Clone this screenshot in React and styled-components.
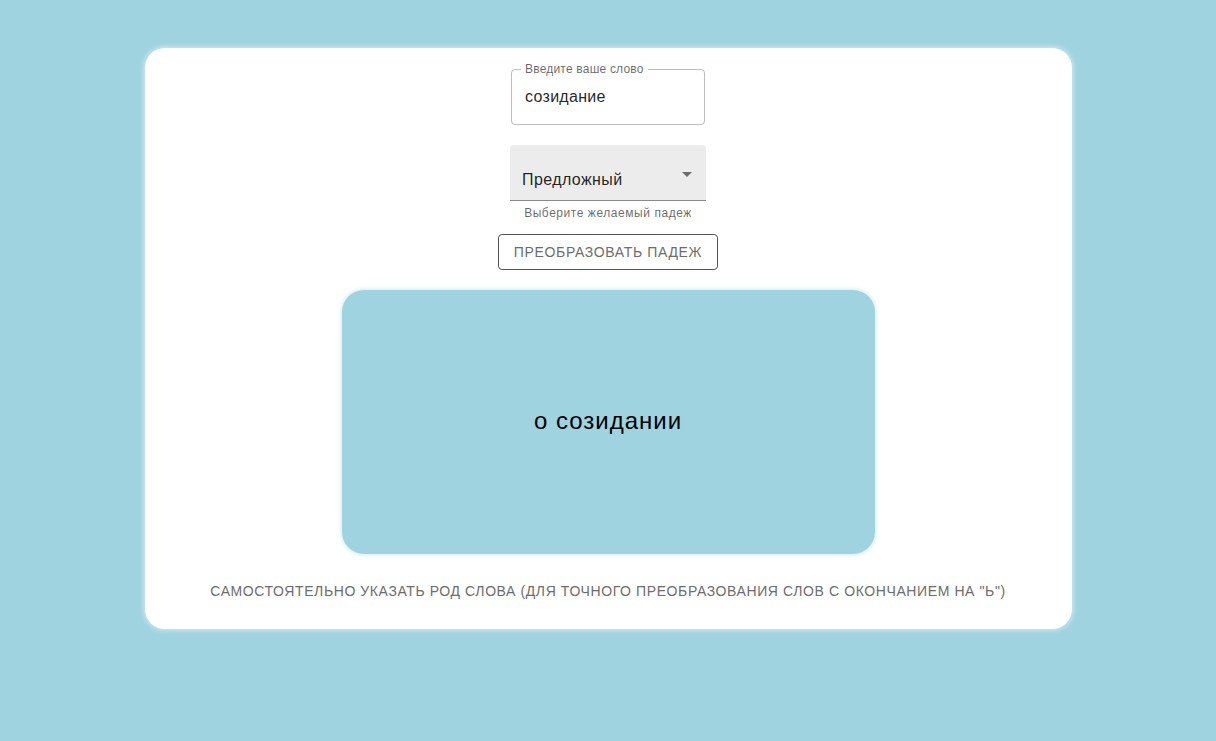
import styled, { createGlobalStyle } from 'styled-components';

const GlobalStyle = createGlobalStyle`
  html, body {
    margin: 0;
    background: #9fd3e0;
    font-family: "Liberation Sans", Arial, sans-serif;
  }
`;

const Page = styled.div`
  min-height: 741px;
  padding-top: 48px;
  box-sizing: border-box;
  display: flex;
  justify-content: center;
  align-items: flex-start;
`;

const Card = styled.div`
  width: 927px;
  box-sizing: border-box;
  background: #fff;
  border-radius: 20px;
  box-shadow: 0 0 4px 2px #c7e6ee;
  padding: 21px 0 20px;
  display: flex;
  flex-direction: column;
  align-items: center;
`;

const Outlined = styled.div`
  width: 194px;
  height: 56px;
  box-sizing: border-box;
  border: 1px solid rgba(0, 0, 0, 0.26);
  border-radius: 4px;
  padding: 0 13px;
  position: relative;
  display: flex;
  align-items: center;
`;

const FloatLabel = styled.span`
  position: absolute;
  left: 9px;
  top: -8px;
  padding: 0 4px;
  background: #fff;
  font-size: 12px;
  line-height: 14px;
  letter-spacing: 0.2px;
  color: rgba(0, 0, 0, 0.6);
`;

const Value = styled.div`
  font-size: 16px;
  letter-spacing: 0.3px;
  color: rgba(0, 0, 0, 0.87);
`;

const SelectWrap = styled.div`
  margin-top: 20px;
  display: flex;
  flex-direction: column;
  align-items: center;
`;

const Filled = styled.div`
  width: 196px;
  height: 56px;
  box-sizing: border-box;
  background: #ececec;
  border-radius: 4px 4px 0 0;
  border-bottom: 1px solid rgba(0, 0, 0, 0.42);
  padding: 26px 12px 0 12px;
  display: flex;
  justify-content: space-between;
  align-items: flex-start;
  font-size: 16px;
  letter-spacing: 0.4px;
  color: rgba(0, 0, 0, 0.87);
`;

const Arrow = styled.svg`
  width: 24px;
  height: 24px;
  fill: rgba(0, 0, 0, 0.54);
  margin-top: -9px;
  margin-right: -5px;
`;

const Helper = styled.div`
  font-size: 12px;
  color: rgba(0, 0, 0, 0.6);
  margin-top: 4px;
  line-height: 16px;
  letter-spacing: 0.55px;
`;

const OutlineButton = styled.button`
  margin-top: 13px;
  height: 36px;
  width: 220px;
  padding: 0;
  background: #fff;
  border: 1px solid #555;
  border-radius: 4px;
  font-family: inherit;
  font-size: 14px;
  letter-spacing: 0.65px;
  color: #6d6d6d;
  text-transform: uppercase;
  cursor: pointer;
`;

const Result = styled.div`
  margin-top: 20px;
  width: 533px;
  height: 264px;
  background: #9fd3e0;
  border-radius: 22px;
  box-shadow: 0 0 3px 2px #e2f2f6;
  display: flex;
  align-items: center;
  justify-content: center;
  font-size: 24px;
  letter-spacing: 1px;
  color: #000;
  padding-bottom: 2px;
  box-sizing: border-box;
`;

const TextButton = styled.button`
  margin-top: 19px;
  height: 36px;
  padding: 0 8px;
  background: transparent;
  border: none;
  font-family: inherit;
  font-size: 14px;
  letter-spacing: 0.6px;
  color: #6d6d6d;
  text-transform: uppercase;
  cursor: pointer;
`;

export default function App() {
  return (
    <>
      <GlobalStyle />
      <Page>
        <Card>
          <Outlined>
            <FloatLabel>Введите ваше слово</FloatLabel>
            <Value>созидание</Value>
          </Outlined>
          <SelectWrap>
            <Filled>
              <span>Предложный</span>
              <Arrow viewBox="0 0 24 24">
                <path d="M7 10l5 5 5-5z" />
              </Arrow>
            </Filled>
            <Helper>Выберите желаемый падеж</Helper>
          </SelectWrap>
          <OutlineButton>Преобразовать падеж</OutlineButton>
          <Result>о созидании</Result>
          <TextButton>
            Самостоятельно указать род слова (для точного преобразования слов с окончанием на "ь")
          </TextButton>
        </Card>
      </Page>
    </>
  );
}
